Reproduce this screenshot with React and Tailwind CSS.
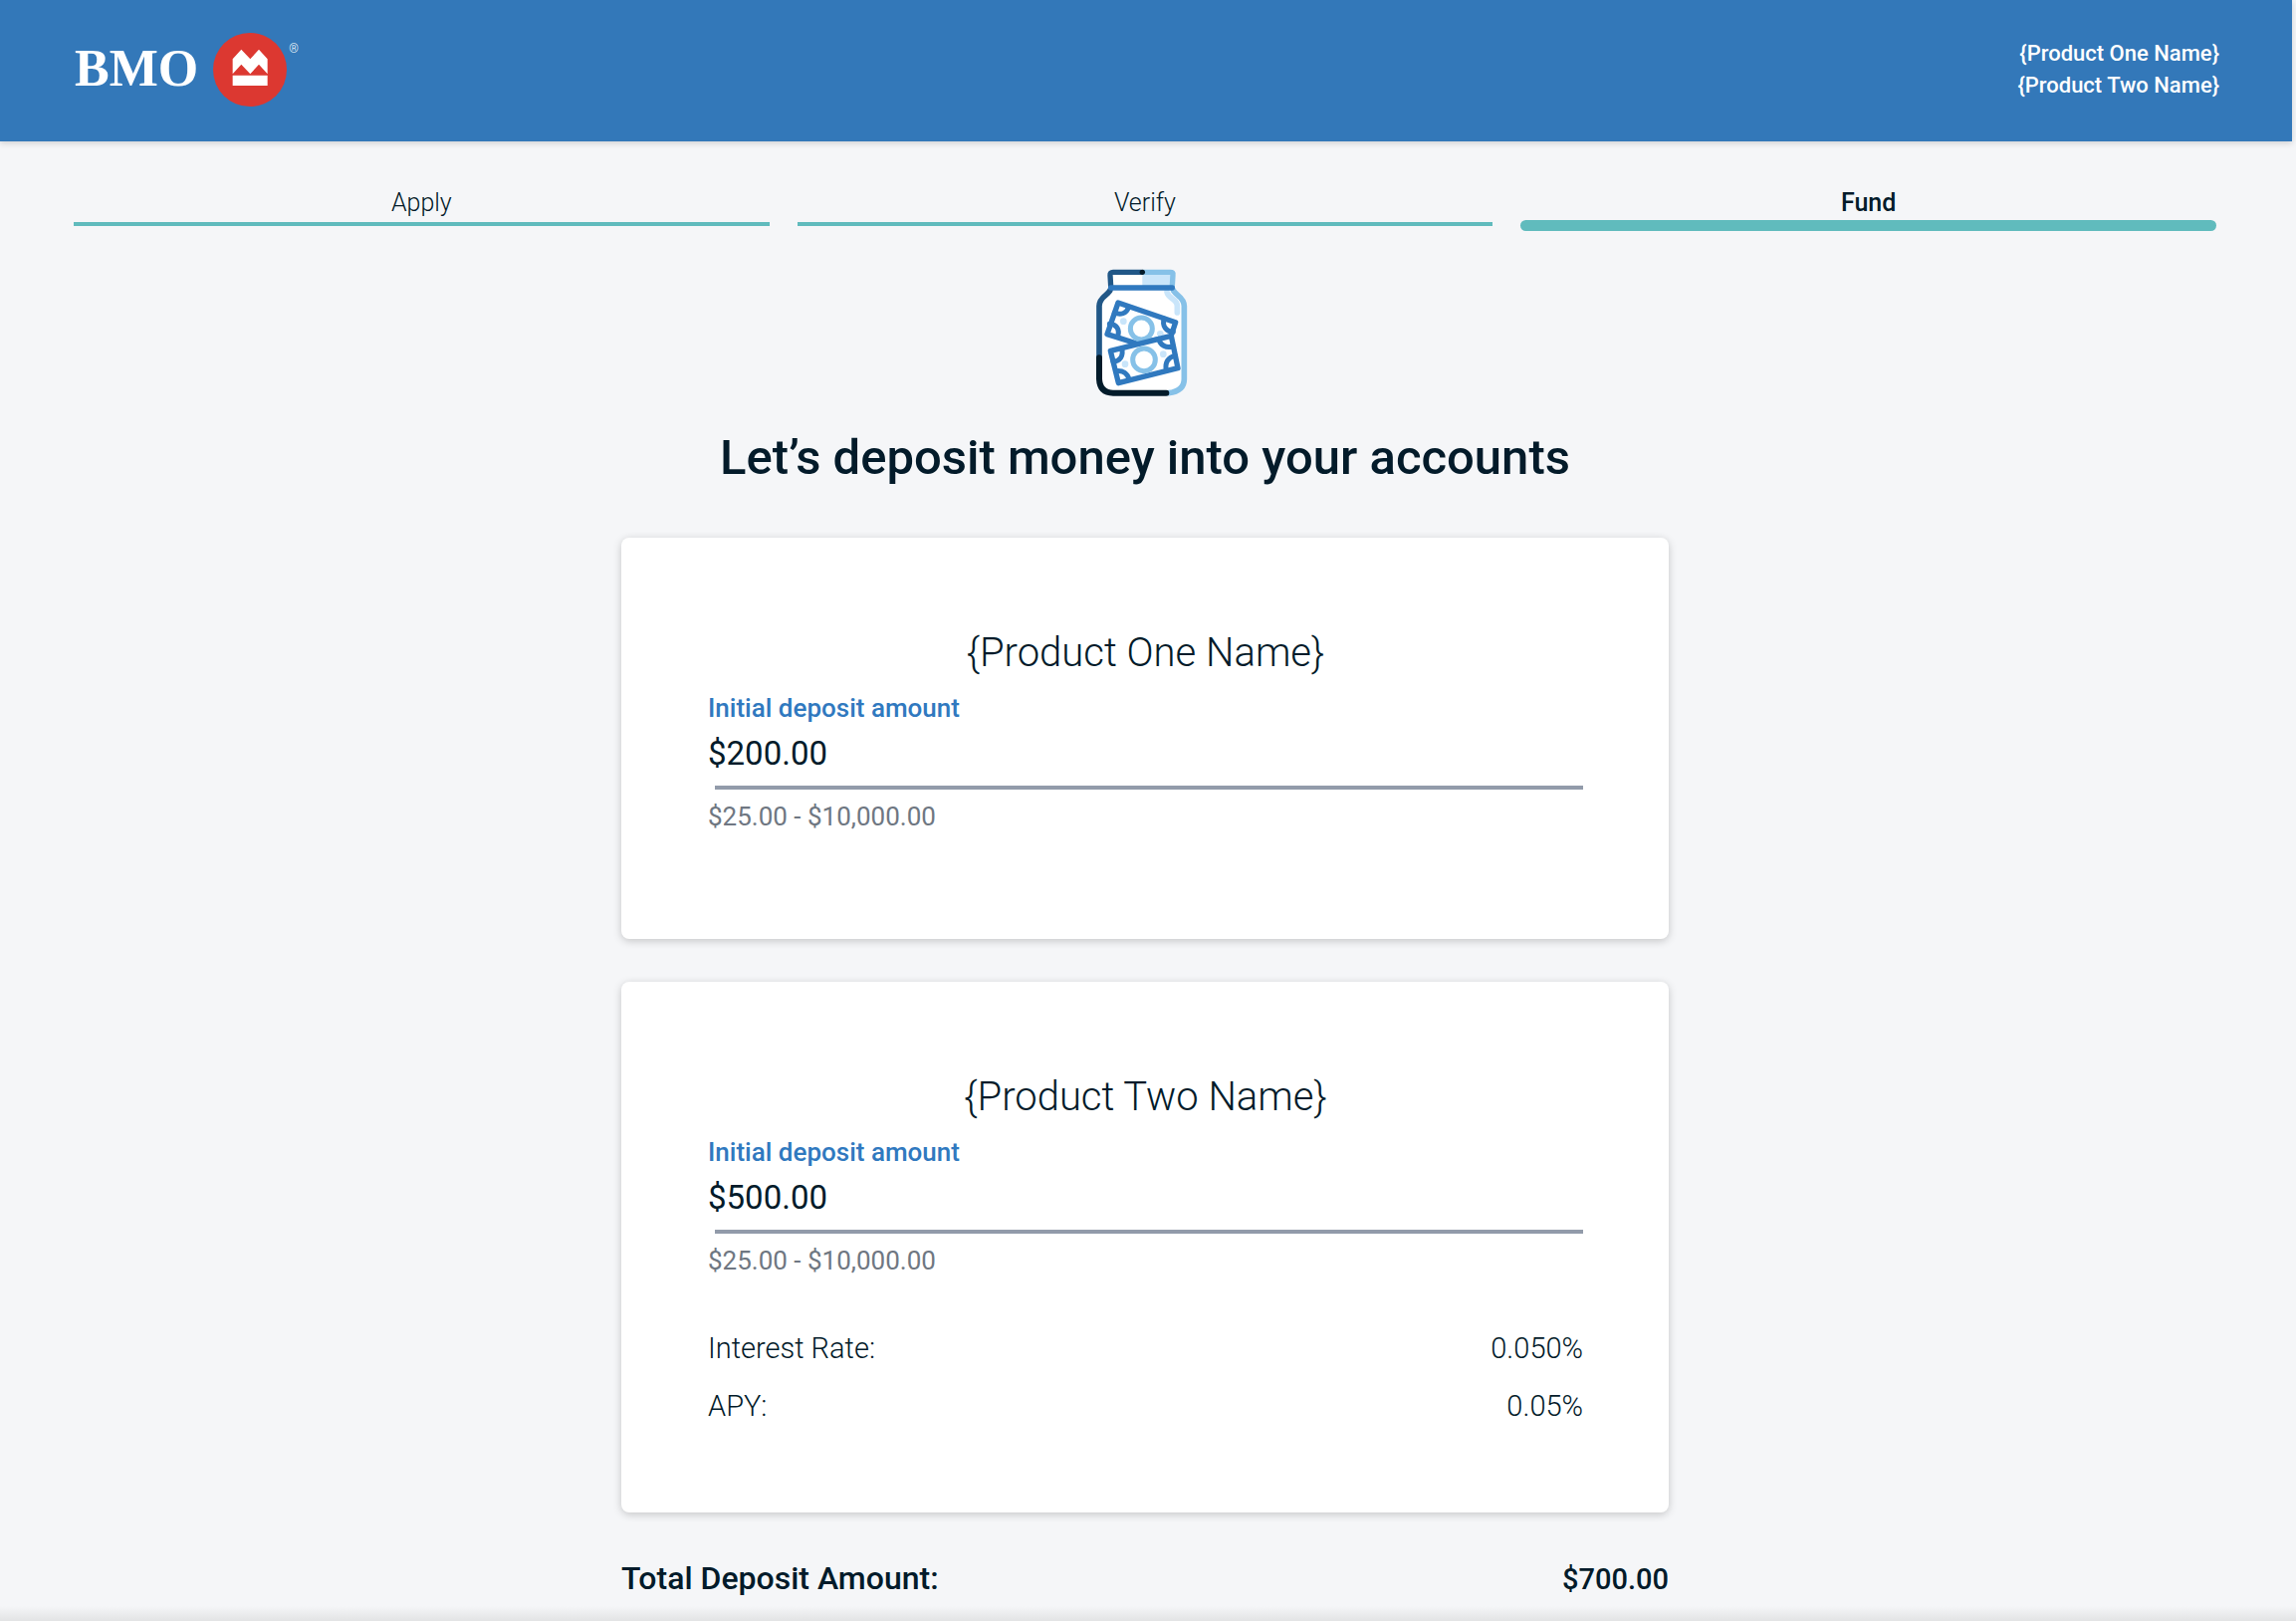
import { useState } from "react";

const steps = [
  { name: "Apply", active: false },
  { name: "Verify", active: false },
  { name: "Fund", active: true },
];

function Logo() {
  return (
    <a href="#" className="flex items-center gap-[15px] text-white">
      <span className="pb-0.5 font-['Liberation_Serif',serif] text-[52px] leading-[72px] font-bold">
        BMO
      </span>
      <span className="flex items-start">
        <svg width="76" height="74" viewBox="0 0 228 222" aria-hidden="true">
          <circle cx="111" cy="111" r="111" fill="#dc3831" />
          <path
            d="M59 79L85 50L112 79L138 50L164 79V124L138 95L112 124L85 95L59 124Z"
            fill="#fff"
          />
          <path d="M59 128H164V159H59Z" fill="#fff" />
        </svg>
        <span className="pt-2 font-['Roboto',sans-serif] text-[12px] leading-4 font-light">
          ®
        </span>
      </span>
    </a>
  );
}

function Header({ products }) {
  return (
    <header className="flex items-start justify-between bg-[#3378b9] pt-[33px] pr-[73px] pb-[35px] pl-[75px] shadow-[0_2px_6px_rgba(0,0,0,0.15)]">
      <Logo />
      <ul className="pt-[5px] text-right text-[22px] leading-8 font-medium text-white">
        {products.map((product) => (
          <li key={product.id}>{product.name}</li>
        ))}
      </ul>
    </header>
  );
}

function Steps() {
  return (
    <ol className="grid grid-cols-3 gap-7">
      {steps.map((step) => (
        <li key={step.name} aria-current={step.active ? "step" : undefined}>
          <div
            className={`pb-px text-center text-[25px] leading-8 ${
              step.active ? "font-medium" : "font-light"
            }`}
          >
            {step.name}
          </div>
          <div
            className={
              step.active
                ? "h-[11px] rounded-full bg-[#60bbbd]"
                : "mt-0.5 h-1 bg-[#60bbbd]"
            }
          />
        </li>
      ))}
    </ol>
  );
}

function JarIcon() {
  return (
    <svg
      width="96"
      height="130"
      viewBox="68 43 288 390"
      fill="none"
      strokeLinecap="round"
      strokeLinejoin="round"
      className="overflow-visible"
      aria-hidden="true"
    >
      {/* glass */}
      <path
        d="M108 103C108 122 74 128 74 160V378Q74 420 116 420H290Q330 420 330 378V160C330 128 297 122 297 103Z"
        fill="#fff"
      />
      <path d="M107 56H204V103H115Z" fill="#fff" />
      <path d="M204 56H296V103H204Z" fill="#c9e5fa" />
      <path
        d="M278 116C282 138 309 134 309 158V178"
        stroke="#c9e5fa"
        strokeWidth="17"
      />
      <path
        d="M297 110C301 124 330 130 330 158V378Q330 414 283 420"
        stroke="#86c1e8"
        strokeWidth="17"
      />
      <path
        d="M107 110C103 124 74 130 74 158V315"
        stroke="#215787"
        strokeWidth="17"
      />
      <path
        d="M74 314V378Q76 420 116 420H276"
        stroke="#031b2a"
        strokeWidth="18"
      />

      {/* lid */}
      <path
        d="M204 56H288Q298 56 296 64L294 98"
        stroke="#86c1e8"
        strokeWidth="16"
      />
      <path
        d="M200 56H116Q106 56 107 65L109 98"
        stroke="#215787"
        strokeWidth="16"
      />
      <circle cx="204" cy="56" r="8" fill="#031b2a" />
      <path d="M109 103H294" stroke="#3079bf" strokeWidth="16" />

      {/* back bill */}
      <path
        d="M131 148L304 207L290 250L187 271L98 243Z"
        fill="#fff"
        stroke="#3079bf"
        strokeWidth="16"
      />
      <path
        d="M162 163C156 181 138 186 120 178M105 212C127 214 136 228 130 250M270 196C262 217 276 236 297 236"
        stroke="#3079bf"
        strokeWidth="15"
      />
      <circle cx="147" cy="204" r="10" fill="#c9e5fa" />
      <circle cx="258" cy="242" r="10" fill="#c9e5fa" />
      <circle
        cx="201"
        cy="226"
        r="33"
        fill="#fff"
        stroke="#86c1e8"
        strokeWidth="15"
      />

      {/* front bill */}
      <path
        d="M108 293L291 248L311 345L132 390Z"
        fill="#fff"
        stroke="#3079bf"
        strokeWidth="16"
      />
      <path
        d="M142 286C148 309 136 325 116 326M254 257C257 276 276 286 295 280M303 308C282 312 271 327 276 352M125 354C145 351 160 362 164 380"
        stroke="#3079bf"
        strokeWidth="15"
      />
      <circle cx="267" cy="303" r="10" fill="#c9e5fa" />
      <circle cx="152" cy="333" r="10" fill="#c9e5fa" />
      <circle cx="209" cy="320" r="34" stroke="#86c1e8" strokeWidth="15" />
    </svg>
  );
}

function DepositCard({ product, onChange }) {
  return (
    <section className="rounded-lg bg-white pt-[92px] pr-[86px] pb-[78px] pl-[87px] shadow-[0_2px_8px_rgba(0,0,0,0.2)]">
      <h2 className="text-center text-[40px] leading-[48px] font-light">
        {product.name}
      </h2>
      <label
        htmlFor={product.id}
        className="block pt-[11px] text-[26px] leading-10 font-medium text-[#3079bf]"
      >
        Initial deposit amount
      </label>
      <input
        id={product.id}
        type="text"
        value={product.amount}
        onChange={(e) => onChange(product.id, e.target.value)}
        aria-describedby={`${product.id}-range`}
        className="block h-[58px] w-full bg-transparent pb-2 text-[33px] leading-10 outline-none"
      />
      <div className="ml-[7px] h-1 bg-[#929baa]" />
      <p
        id={`${product.id}-range`}
        className="pt-[11px] pb-[29px] text-[26px] leading-8 text-[#6f7782]"
      >
        {product.range}
      </p>

      {product.rates && (
        <dl className="pt-3.5 text-[29px] leading-[58px] font-light">
          {product.rates.map((rate) => (
            <div key={rate.label} className="flex justify-between">
              <dt>{rate.label}</dt>
              <dd>{rate.value}</dd>
            </div>
          ))}
        </dl>
      )}
    </section>
  );
}

export default function App() {
  const [products, setProducts] = useState([
    {
      id: "product-one",
      name: "{Product One Name}",
      amount: "$200.00",
      range: "$25.00 - $10,000.00",
    },
    {
      id: "product-two",
      name: "{Product Two Name}",
      amount: "$500.00",
      range: "$25.00 - $10,000.00",
      rates: [
        { label: "Interest Rate:", value: "0.050%" },
        { label: "APY:", value: "0.05%" },
      ],
    },
  ]);

  const handleChange = (id, amount) => {
    setProducts(products.map((p) => (p.id === id ? { ...p, amount } : p)));
  };

  const total = products.reduce(
    (sum, p) => sum + (parseFloat(p.amount.replace(/[$,]/g, "")) || 0),
    0
  );

  return (
    <div className="min-h-screen bg-[#f5f6f8] font-['Roboto',sans-serif] text-[#031b2a]">
      <div className="pr-1">
        <Header products={products} />

        <main className="pt-[46px] pr-[76px] pl-[74px]">
          <Steps />

          <div className="mx-auto max-w-[1052px]">
            <div className="flex justify-center pt-[37px]">
              <JarIcon />
            </div>
            <h1 className="pt-[29px] pb-12 text-center text-[49px] leading-[64px] font-medium">
              Let’s deposit money into your accounts
            </h1>

            <div className="flex flex-col gap-[43px]">
              {products.map((product) => (
                <DepositCard
                  key={product.id}
                  product={product}
                  onChange={handleChange}
                />
              ))}
            </div>

            <div className="flex items-baseline justify-between pt-[46px] pb-[7px] font-medium">
              <span className="text-[32px] leading-10">
                Total Deposit Amount:
              </span>
              <span className="text-[29px] leading-10">
                ${total.toFixed(2)}
              </span>
            </div>
          </div>
        </main>
      </div>
      <div className="h-4 bg-linear-to-b from-[#f5f6f8] to-[#e1e2e3]" />
    </div>
  );
}
